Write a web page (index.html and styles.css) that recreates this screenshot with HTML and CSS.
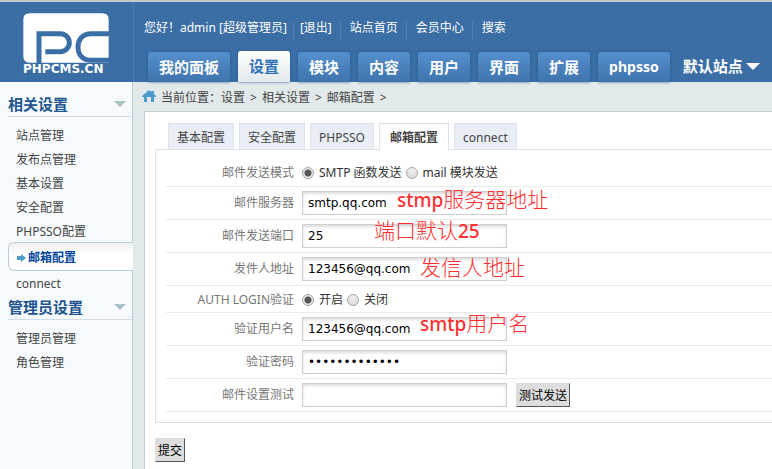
FILE: index.html
```html
<!DOCTYPE html>
<html lang="zh-CN">

<head>
    <meta charset="utf-8">
    <meta name="viewport" content="width=device-width, initial-scale=1.0">
    <title>PHPCMS</title>

    <link rel="stylesheet" href="styles.css">
</head>

<body>
    <header class="header">
        <a class="logo" href="#">
            <svg viewBox="0 0 258 150" width="86" height="50" aria-hidden="true">
                <path fill="#fff" d="M20 1H238Q257 1 257 20V149H20Q1 149 1 130V20Q1 1 20 1Z" />
                <path fill="none" stroke="#3a6ea5" stroke-width="15" d="M48 152V62H112A27 27 0 0 1 112 116H67" />
                <path fill="none" stroke="#3a6ea5" stroke-width="15" d="M260 62H204C178 62 165 80 165 102C165 126 180 142 206 142H260" />
            </svg>
            <span>PHPCMS.CN</span>
        </a>
        <div class="header_right">
            <div class="userbar">
                <span>您好！admin [超级管理员]</span>
                <a href="#">[退出]</a>
                <a href="#">站点首页</a>
                <a href="#">会员中心</a>
                <a href="#">搜索</a>
            </div>
            <nav class="topmenu">
                <a href="#">我的面板</a>
                <a class="on" href="#">设置</a>
                <a href="#">模块</a>
                <a href="#">内容</a>
                <a href="#">用户</a>
                <a href="#">界面</a>
                <a href="#">扩展</a>
                <a class="latin" href="#">phpsso</a>
                <button class="site" type="button">默认站点<i class="arrow"></i></button>
            </nav>
        </div>
    </header>

    <div class="wrap">
        <aside class="sidebar">
            <h3>相关设置<i class="arrow"></i></h3>
            <ul>
                <li><a href="#">站点管理</a></li>
                <li><a href="#">发布点管理</a></li>
                <li><a href="#">基本设置</a></li>
                <li><a href="#">安全配置</a></li>
                <li><a href="#">PHPSSO配置</a></li>
                <li class="on"><a href="#"><svg viewBox="0 0 9 8" width="9" height="8" aria-hidden="true"><path fill="#4b9bcd" d="M0 2H4V0L9 4L4 8V6H0Z" /></svg>邮箱配置</a></li>
                <li><a href="#">connect</a></li>
            </ul>
            <h3>管理员设置<i class="arrow"></i></h3>
            <ul>
                <li><a href="#">管理员管理</a></li>
                <li><a href="#">角色管理</a></li>
            </ul>
        </aside>

        <main class="main">
            <div class="crumbs">
                <svg viewBox="0 0 14 12" width="14" height="12" aria-hidden="true"><path fill="#4b9bcd" d="M7 0L9 2V1H12V4L14 6V7H12V12H9V7H5V12H2V7H0V6Z" /></svg>
                <span>当前位置：设置</span>
                <span>&gt;</span>
                <span>相关设置</span>
                <span>&gt;</span>
                <span>邮箱配置</span>
                <span>&gt;</span>
            </div>
            <div class="content">
                <div class="tabs">
                    <a href="#">基本配置</a>
                    <a href="#">安全配置</a>
                    <a href="#">PHPSSO</a>
                    <a class="on" href="#">邮箱配置</a>
                    <a href="#">connect</a>
                </div>
                <form>
                    <div class="box">
                        <table>
                            <tr class="low">
                                <th>邮件发送模式</th>
                                <td>
                                    <div class="field">
                                        <label><input type="radio" name="mail_type" checked>SMTP 函数发送</label>
                                        <label><input type="radio" name="mail_type">mail 模块发送</label>
                                    </div>
                                </td>
                            </tr>
                            <tr>
                                <th><label for="server">邮件服务器</label></th>
                                <td>
                                    <div class="field"><input class="text" type="text" id="server" value="smtp.qq.com"><span class="note note_server"><b>stmp</b>服务器地址</span></div>
                                </td>
                            </tr>
                            <tr>
                                <th><label for="port">邮件发送端口</label></th>
                                <td>
                                    <div class="field"><input class="text" type="text" id="port" value="25"><span class="note note_port">端口默认<b>25</b></span></div>
                                </td>
                            </tr>
                            <tr>
                                <th><label for="from">发件人地址</label></th>
                                <td>
                                    <div class="field"><input class="text" type="text" id="from" value="123456@qq.com"><span class="note note_from">发信人地址</span></div>
                                </td>
                            </tr>
                            <tr class="low">
                                <th>AUTH LOGIN验证</th>
                                <td>
                                    <div class="field">
                                        <label><input type="radio" name="auth" checked>开启</label>
                                        <label><input type="radio" name="auth">关闭</label>
                                    </div>
                                </td>
                            </tr>
                            <tr>
                                <th><label for="user">验证用户名</label></th>
                                <td>
                                    <div class="field"><input class="text" type="text" id="user" value="123456@qq.com"><span class="note note_user"><b>smtp</b>用户名</span></div>
                                </td>
                            </tr>
                            <tr>
                                <th><label for="password">验证密码</label></th>
                                <td>
                                    <div class="field"><input class="text" type="password" id="password" value="1234567890123"></div>
                                </td>
                            </tr>
                            <tr>
                                <th><label for="test">邮件设置测试</label></th>
                                <td>
                                    <div class="field"><input class="text" type="text" id="test"><button class="button" type="button">测试发送</button></div>
                                </td>
                            </tr>
                        </table>
                    </div>
                    <button class="button" type="submit">提交</button>
                </form>
            </div>
        </main>
    </div>
</body>

</html>
```
FILE: styles.css
```css
* {
    box-sizing: border-box;
}

body {
    margin: 0;
    min-height: 100vh;
    display: flex;
    flex-direction: column;
    font: 12px/24px "Noto Sans", "Noto Sans CJK SC", sans-serif;
    color: #444;
    background-color: #e2e9ea;
}

a {
    color: inherit;
    text-decoration: none;
}

ul {
    list-style: none;
    margin: 0;
    padding: 6px 0 0;
}

.arrow {
    border: 6px solid transparent;
    border-bottom: 0;
    border-top-color: currentColor;
}

/* header */
.header {
    display: flex;
    height: 82px;
    color: #fff;
    background-color: #3a6ea5;
    border-top: 2px solid #c9cac8;
    white-space: nowrap;
}

.logo {
    width: 134px;
    flex: none;
    padding: 11px 0 0 23px;
    border-right: 1px solid #4a7db5;
    font: bold 12px/13px "DejaVu Sans", sans-serif;
}

.logo svg {
    display: block;
}

.header_right {
    display: flex;
    flex-direction: column;
    justify-content: space-between;
}

.userbar {
    display: flex;
    padding: 14px 0 0 10px;
}

.userbar a {
    line-height: 12px;
    margin: 6px 0 0 6px;
    padding-left: 6px;
    border-left: 1px solid #4a82bf;
}

.userbar a + a {
    margin-left: 8px;
    padding-left: 9px;
}

.topmenu {
    display: flex;
    align-items: flex-end;
    gap: 8px;
    padding-left: 14px;
    font-size: 15px;
    font-weight: bold;
}

.topmenu a {
    height: 30px;
    line-height: 30px;
    padding: 0 11px;
    border-radius: 3px 3px 0 0;
    background: linear-gradient(#558fce, #3f74ad);
    box-shadow: 0 0 3px #2c5a8e;
}

.topmenu .on {
    height: 31px;
    color: #2e72b8;
    background: linear-gradient(#fff, #e2e9ea);
}

.topmenu .latin {
    font-size: 14px;
}

.site {
    display: flex;
    align-items: center;
    gap: 3px;
    height: 32px;
    padding: 0 5px;
    border: 0;
    background: none;
    color: #fff;
    font: inherit;
}

.site .arrow {
    border-width: 7px 7px 0;
}

/* left menu */
.wrap {
    flex: 1;
    display: flex;
}

.sidebar {
    width: 133px;
    flex: none;
    padding: 10px 0 0 8px;
    background-color: #f6fafc;
    border-right: 1px solid #bccfdb;
}

.sidebar h3 {
    display: flex;
    align-items: center;
    justify-content: space-between;
    height: 25px;
    margin: 0;
    padding-right: 6px;
    font-size: 15px;
    color: #225590;
    border-bottom: 1px solid #d0dde8;
}

.sidebar h3 .arrow {
    color: #adbfc6;
}

.sidebar li {
    height: 24px;
    line-height: 26px;
    padding-left: 8px;
}

.sidebar .on {
    height: 29px;
    line-height: 29px;
    margin: -1px -1px 0 0;
    font-weight: bold;
    color: #00449c;
    background: linear-gradient(#eceff1, #fff 10px);
    border: 1px solid #bccfdb;
    border-right: 0;
    border-radius: 6px 0 0 6px;
}

.sidebar .on svg {
    margin-right: 2px;
}

/* content */
.main {
    flex: 1;
    min-width: 0;
    padding-left: 11px;
    display: flex;
    flex-direction: column;
}

.crumbs {
    display: flex;
    align-items: center;
    gap: 5px;
    height: 29px;
    padding: 3px 0 0;
    margin-left: -2px;
}

.crumbs svg {
    margin-bottom: 4px;
}

.content {
    flex: 1;
    padding: 11px 0 0 10px;
    background-color: #fff;
    border: 1px solid #c2ced8;
    border-width: 1px 0 0 1px;
}

.tabs {
    display: flex;
    gap: 5px;
    padding-left: 13px;
}

.tabs a {
    height: 26px;
    line-height: 27px;
    padding: 0 8px;
    background-color: #e9edf6;
    border: 1px solid #dce3ed;
    border-bottom: 0;
}

.tabs .on {
    height: 27px;
    margin-bottom: -1px;
    padding: 0 10px;
    font-weight: bold;
    background-color: #fff;
    position: relative;
}

.box {
    padding: 9px 0 10px 10px;
    margin-bottom: 15px;
    border: 1px solid #dce3ed;
    border-right: 0;
}

table {
    width: 100%;
    border-collapse: collapse;
}

th,
td {
    padding: 0;
    height: 33px;
    border-bottom: 1px solid #ebebeb;
}

.low th,
.low td {
    height: 27px;
}

th {
    width: 128px;
    font-weight: normal;
    text-align: right;
    color: #777;
}

.low th,
.low .field {
    padding-top: 2px;
}

.field {
    display: flex;
    align-items: center;
    gap: 9px;
    padding-left: 8px;
    position: relative;
    color: #333;
}

.low .field {
    gap: 4px;
}

.field label {
    display: flex;
    align-items: center;
    gap: 5px;
}

input[type="radio"] {
    appearance: none;
    width: 12px;
    height: 12px;
    margin: 0;
    border: 1px solid #a6a6a6;
    border-radius: 50%;
    background: linear-gradient(#f0f0f0, #dcdcdc);
}

input[type="radio"]:checked {
    background: radial-gradient(#555 3px, #eaeaea 4px);
}

.text {
    width: 205px;
    height: 24px;
    padding: 0 5px;
    border: 1px solid #d0d0d0;
    box-shadow: inset 0 2px 3px #ddd;
    font: 12px "DejaVu Sans", sans-serif;
    color: #000;
}

/* red remarks lying over the inputs */
.note {
    position: absolute;
    font-size: 21px;
    font-weight: 300;
    line-height: 24px;
    color: #ff3030;
    white-space: nowrap;
    pointer-events: none;
}

.note b {
    font-size: 19px;
    font-weight: 500;
}

.note_server {
    top: -4px;
    left: 103px;
}

.note_port {
    top: -6px;
    left: 80px;
}

.note_from {
    top: -2px;
    left: 126px;
}

.note_user {
    top: -6px;
    left: 126px;
}

.button {
    height: 24px;
    padding: 0 2px;
    border: 1px solid #ddd;
    border-color: #ddd #555 #555 #ddd;
    background-color: #ddd;
    color: #000;
    font: inherit;
}
```
